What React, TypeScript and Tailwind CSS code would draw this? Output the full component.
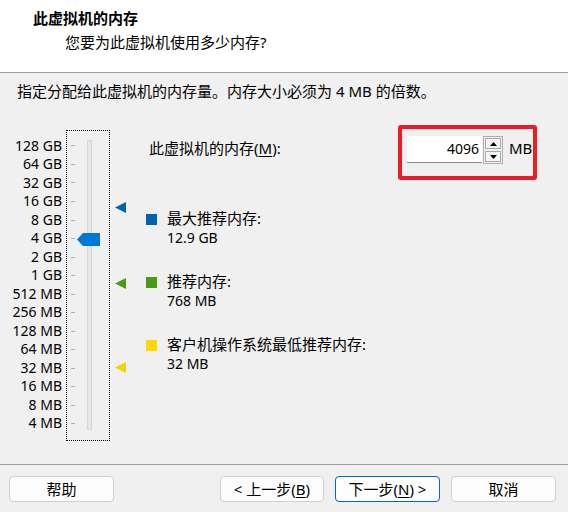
import React from "react";

const scale = [
    "128 GB",
    "64 GB",
    "32 GB",
    "16 GB",
    "8 GB",
    "4 GB",
    "2 GB",
    "1 GB",
    "512 MB",
    "256 MB",
    "128 MB",
    "64 MB",
    "32 MB",
    "16 MB",
    "8 MB",
    "4 MB",
];

function Marker({ color, top }: { color: string; top: string }) {
    return (
        <svg width="11" height="11" viewBox="0 0 11 11" className={`absolute left-0 ${top}`}>
            <polygon points="0,5.5 11,0 11,11" fill={color} />
        </svg>
    );
}

function Legend({ swatch, title, value }: { swatch: string; title: string; value: string }) {
    return (
        <div className="flex flex-row items-start">
            <div className={`mt-[5px] h-[11px] w-[11px] ${swatch}`} />
            <div className="ml-[10px] flex flex-col leading-[19px]">
                <span>{title}</span>
                <span className="text-[14px]">{value}</span>
            </div>
        </div>
    );
}

function Button({ children, primary }: { children: React.ReactNode; primary?: boolean }) {
    return (
        <div
            className={`flex h-[26px] items-center justify-center rounded-[4px] border bg-[#fdfdfd] leading-none ${
                primary ? "border-[#0067c0]" : "border-[#d0d0d0]"
            }`}
        >
            {children}
        </div>
    );
}

export default function App() {
    return (
        <main className="flex h-[512px] w-[568px] flex-col bg-[#f0f0f0] font-['Noto_Sans','Noto_Sans_CJK_SC',sans-serif] text-[15px] text-black">
            {/* header */}
            <div className="flex h-[73px] flex-col border-b border-[#a0a0a0] bg-white pt-[8px] leading-[20px]">
                <h1 className="pl-[33px] font-bold">此虚拟机的内存</h1>
                <p className="mt-[4px] pl-[65px]">您要为此虚拟机使用多少内存?</p>
            </div>

            <p className="mt-[8px] pl-[17px] leading-[20px]">指定分配给此虚拟机的内存量。内存大小必须为 4 MB 的倍数。</p>

            <div className="mt-[24px] flex flex-1 flex-row">
                {/* slider */}
                <div className="mt-[5px] flex flex-row items-start">
                    <div className="flex w-[62px] flex-col pt-[6.7px] text-right text-[14px]">
                        {scale.map((s) => (
                            <span key={s} className="h-[18.53px] leading-[18.53px] whitespace-nowrap">
                                {s}
                            </span>
                        ))}
                    </div>
                    <div className="relative ml-[4px] flex h-[311px] w-[44px] flex-row border border-dotted border-black">
                        <div className="ml-[4px] flex flex-col pt-[5.7px]">
                            {scale.map((s) => (
                                <div key={s} className="flex h-[18.53px] items-center">
                                    <div className="h-px w-[4px] bg-[#b0b0b0]" />
                                </div>
                            ))}
                        </div>
                        <div className="mt-[9px] ml-[12px] h-[290px] w-[5px] border border-[#d6d6d6] bg-[#e7e7e7]" />
                        <svg width="23" height="13" viewBox="0 0 23 13" className="absolute top-[102px] left-[10px]">
                            <polygon points="0,6.5 6,0 23,0 23,13 6,13" fill="#0078d7" />
                        </svg>
                    </div>
                    <div className="relative ml-[5px] h-[311px] w-[11px]">
                        <Marker color="#0063b1" top="top-[71.5px]" />
                        <Marker color="#4a9a1a" top="top-[148px]" />
                        <Marker color="#f5d300" top="top-[231.5px]" />
                    </div>
                </div>

                {/* right side */}
                <div className="ml-[20px] flex flex-1 flex-col">
                    <div className="flex flex-row items-start justify-between pr-[31px]">
                        <span className="mt-[14px] ml-[3px] leading-[18px]">
                            此虚拟机的内存(<span className="underline underline-offset-2">M</span>):
                        </span>
                        <div className="flex h-[55px] w-[139px] flex-row items-start rounded-[3px] border-4 border-[#ed1c24] pt-[7px] pl-[5px]">
                            <div className="flex h-[27px] w-[75px] items-center justify-end border-b border-[#8a8a8a] bg-white pr-[3px] text-[14px] leading-none">
                                4096
                            </div>
                            <div className="ml-px flex h-[28px] w-[20px] flex-col justify-center gap-[2px] border border-[#b0b0b0] bg-[#f0f0f0] px-px">
                                <div className="flex h-[11px] items-center justify-center border border-[#a8a8a8] bg-[#f5f5f5]">
                                    <svg width="7" height="4" viewBox="0 0 7 4">
                                        <polygon points="3.5,0 7,4 0,4" fill="#000" />
                                    </svg>
                                </div>
                                <div className="flex h-[11px] items-center justify-center border border-[#a8a8a8] bg-[#f5f5f5]">
                                    <svg width="7" height="4" viewBox="0 0 7 4">
                                        <polygon points="0,0 7,0 3.5,4" fill="#000" />
                                    </svg>
                                </div>
                            </div>
                            <span className="mt-[3px] ml-[6px] leading-[18px]">MB</span>
                        </div>
                    </div>

                    <div className="mt-[29px] flex flex-col gap-[25px]">
                        <Legend swatch="bg-[#0063b1]" title="最大推荐内存:" value="12.9 GB" />
                        <Legend swatch="bg-[#4a9a1a]" title="推荐内存:" value="768 MB" />
                        <Legend swatch="bg-[#ffd800]" title="客户机操作系统最低推荐内存:" value="32 MB" />
                    </div>
                </div>
            </div>

            {/* footer */}
            <div className="flex h-[48px] flex-row items-start border-t border-[#a0a0a0] pt-[11px]">
                <div className="ml-[9px] w-[105px]">
                    <Button>帮助</Button>
                </div>
                <div className="flex-1" />
                <div className="w-[104px]">
                    <Button>
                        &lt; 上一步(<span className="underline underline-offset-2">B</span>)
                    </Button>
                </div>
                <div className="ml-[11px] w-[105px]">
                    <Button primary>
                        下一步(<span className="underline underline-offset-2">N</span>) &gt;
                    </Button>
                </div>
                <div className="mr-[12px] ml-[11px] w-[105px]">
                    <Button>取消</Button>
                </div>
            </div>
        </main>
    );
}
